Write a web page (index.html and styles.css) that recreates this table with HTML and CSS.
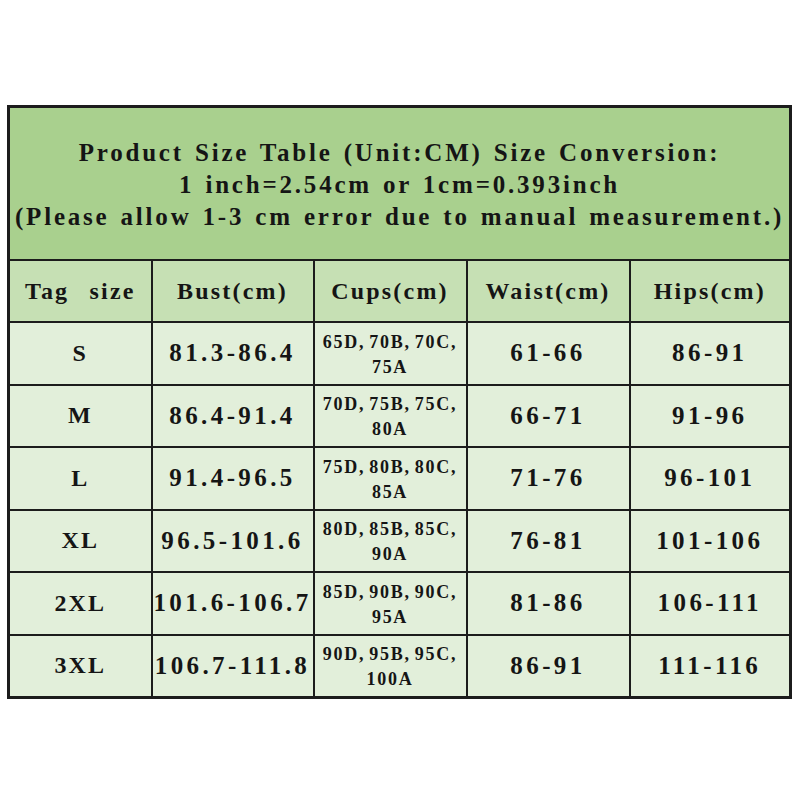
FILE: index.html
```html
<!DOCTYPE html>
<html>
<head>
<meta charset="utf-8">
<link rel="stylesheet" href="styles.css">
</head>
<body>
<table class="size-table">
  <colgroup>
    <col class="c1"><col class="c2"><col class="c3"><col class="c4"><col class="c5">
  </colgroup>
  <tr class="title-row">
    <td colspan="5">Product Size Table (Unit:CM) Size Conversion:<br>1 inch=2.54cm or 1cm=0.393inch<br>(Please allow 1-3 cm error due to manual measurement.)</td>
  </tr>
  <tr class="head-row">
    <td>Tag size</td><td>Bust(cm)</td><td>Cups(cm)</td><td>Waist(cm)</td><td>Hips(cm)</td>
  </tr>
  <tr class="data-row">
    <td>S</td><td>81.3-86.4</td><td class="cups">65D, 70B, 70C,<br>75A</td><td>61-66</td><td>86-91</td>
  </tr>
  <tr class="data-row">
    <td>M</td><td>86.4-91.4</td><td class="cups">70D, 75B, 75C,<br>80A</td><td>66-71</td><td>91-96</td>
  </tr>
  <tr class="data-row">
    <td>L</td><td>91.4-96.5</td><td class="cups">75D, 80B, 80C,<br>85A</td><td>71-76</td><td>96-101</td>
  </tr>
  <tr class="data-row">
    <td>XL</td><td>96.5-101.6</td><td class="cups">80D, 85B, 85C,<br>90A</td><td>76-81</td><td>101-106</td>
  </tr>
  <tr class="data-row">
    <td>2XL</td><td>101.6-106.7</td><td class="cups">85D, 90B, 90C,<br>95A</td><td>81-86</td><td>106-111</td>
  </tr>
  <tr class="data-row">
    <td>3XL</td><td>106.7-111.8</td><td class="cups">90D, 95B, 95C,<br>100A</td><td>86-91</td><td>111-116</td>
  </tr>
</table>
</body>
</html>
```

FILE: styles.css
```css
html, body {
  margin: 0;
  padding: 0;
  background: #ffffff;
}

.size-table {
  margin: 105px 0 0 7px;
  width: 782px;
  table-layout: fixed;
  border-collapse: collapse;
  border: 3px solid #1c1c1c;
  font-family: "Liberation Serif", "Times New Roman", serif;
  font-weight: bold;
  color: #151515;
}

.c1 { width: 143px; }
.c2 { width: 162px; }
.c3 { width: 153px; }
.c4 { width: 163px; }
.c5 { width: 161px; }

.size-table td {
  border: 2px solid #1c1c1c;
  text-align: center;
  vertical-align: middle;
  padding: 0;
  font-size: 24px;
  letter-spacing: 2px;
  white-space: nowrap;
}

.title-row td {
  height: 149px;
  background: #a9d08e;
  line-height: 32px;
  padding-top: 2px;
  font-size: 25px;
  letter-spacing: 2.8px;
  word-spacing: 2px;
}

.head-row td {
  height: 60px;
  background: #c6e0b4;
  letter-spacing: 2.2px;
}

.head-row td:first-child {
  word-spacing: 12px;
}

.data-row td {
  height: 60.5px;
  background: #e2efda;
  font-size: 25px;
  letter-spacing: 3.4px;
}

.data-row td:first-child {
  font-size: 24px;
  letter-spacing: 2px;
}

.size-table td.cups {
  height: 57.5px;
  padding-top: 3px;
  font-size: 18px;
  line-height: 25px;
  letter-spacing: 1.7px;
  word-spacing: -2px;
}
```
